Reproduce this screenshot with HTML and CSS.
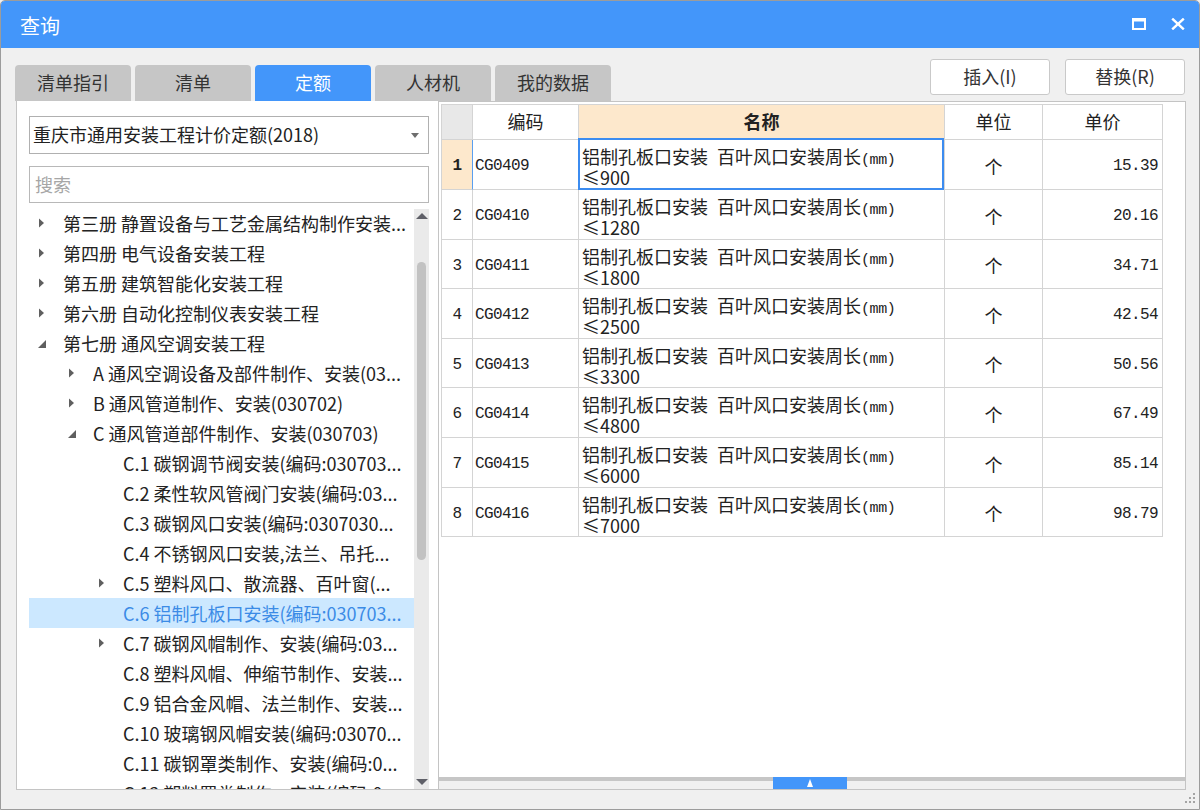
FILE: index.html
```html
<!DOCTYPE html>
<html lang="zh-CN">
<head>
<meta charset="utf-8">
<title>查询</title>
<link rel="stylesheet" href="styles.css">
</head>
<body>
<div class="window">
  <div class="titlebar">
    <span class="title">查询</span>
    <div class="winctl">
      <svg class="ico" width="14" height="12" viewBox="0 0 14 12"><path d="M0 0H14V12H0Z M2 3.5V10H12V3.5Z" fill="#fff" fill-rule="evenodd"/></svg>
      <svg class="ico" width="14" height="12" viewBox="0 0 14 12"><path d="M1.2 0.6L12.8 11.4M12.8 0.6L1.2 11.4" stroke="#fff" stroke-width="2.4" fill="none"/></svg>
    </div>
  </div>
  <div class="main">
    <div class="toprow">
      <div class="tabs">
        <div class="tab">清单指引</div>
        <div class="tab">清单</div>
        <div class="tab active">定额</div>
        <div class="tab">人材机</div>
        <div class="tab">我的数据</div>
      </div>
      <div class="actions">
        <div class="btn">插入(I)</div>
        <div class="btn">替换(R)</div>
      </div>
    </div>
    <div class="panels">
      <div class="left">
        <div class="select">
          <span>重庆市通用安装工程计价定额(2018)</span>
          <svg width="8" height="5" viewBox="0 0 8 5"><path d="M0 0H8L4 5Z" fill="#6e6e6e"/></svg>
        </div>
        <div class="search">搜索</div>
        <div class="treewrap">
          <div class="tree">
            <div class="node"><span class="exp"><svg width="7" height="10" viewBox="0 0 7 10"><path d="M1 0.5L6 5L1 9.5Z" fill="#5f5f5f"/></svg></span><span class="lbl">第三册 静置设备与工艺金属结构制作安装...</span></div>
            <div class="node"><span class="exp"><svg width="7" height="10" viewBox="0 0 7 10"><path d="M1 0.5L6 5L1 9.5Z" fill="#5f5f5f"/></svg></span><span class="lbl">第四册 电气设备安装工程</span></div>
            <div class="node"><span class="exp"><svg width="7" height="10" viewBox="0 0 7 10"><path d="M1 0.5L6 5L1 9.5Z" fill="#5f5f5f"/></svg></span><span class="lbl">第五册 建筑智能化安装工程</span></div>
            <div class="node"><span class="exp"><svg width="7" height="10" viewBox="0 0 7 10"><path d="M1 0.5L6 5L1 9.5Z" fill="#5f5f5f"/></svg></span><span class="lbl">第六册 自动化控制仪表安装工程</span></div>
            <div class="node"><span class="exp"><svg class="down" width="8" height="8" viewBox="0 0 8 8"><path d="M8 0V8H0Z" fill="#5f5f5f"/></svg></span><span class="lbl">第七册 通风空调安装工程</span></div>
            <div class="node l1"><span class="exp"><svg width="7" height="10" viewBox="0 0 7 10"><path d="M1 0.5L6 5L1 9.5Z" fill="#5f5f5f"/></svg></span><span class="lbl">A 通风空调设备及部件制作、安装(03...</span></div>
            <div class="node l1"><span class="exp"><svg width="7" height="10" viewBox="0 0 7 10"><path d="M1 0.5L6 5L1 9.5Z" fill="#5f5f5f"/></svg></span><span class="lbl">B 通风管道制作、安装(030702)</span></div>
            <div class="node l1"><span class="exp"><svg class="down" width="8" height="8" viewBox="0 0 8 8"><path d="M8 0V8H0Z" fill="#5f5f5f"/></svg></span><span class="lbl">C 通风管道部件制作、安装(030703)</span></div>
            <div class="node l2"><span class="exp"></span><span class="lbl">C.1 碳钢调节阀安装(编码:030703...</span></div>
            <div class="node l2"><span class="exp"></span><span class="lbl">C.2 柔性软风管阀门安装(编码:03...</span></div>
            <div class="node l2"><span class="exp"></span><span class="lbl">C.3 碳钢风口安装(编码:0307030...</span></div>
            <div class="node l2"><span class="exp"></span><span class="lbl">C.4 不锈钢风口安装,法兰、吊托...</span></div>
            <div class="node l2"><span class="exp"><svg width="7" height="10" viewBox="0 0 7 10"><path d="M1 0.5L6 5L1 9.5Z" fill="#5f5f5f"/></svg></span><span class="lbl">C.5 塑料风口、散流器、百叶窗(...</span></div>
            <div class="node l2 sel"><span class="exp"></span><span class="lbl">C.6 铝制孔板口安装(编码:030703...</span></div>
            <div class="node l2"><span class="exp"><svg width="7" height="10" viewBox="0 0 7 10"><path d="M1 0.5L6 5L1 9.5Z" fill="#5f5f5f"/></svg></span><span class="lbl">C.7 碳钢风帽制作、安装(编码:03...</span></div>
            <div class="node l2"><span class="exp"></span><span class="lbl">C.8 塑料风帽、伸缩节制作、安装...</span></div>
            <div class="node l2"><span class="exp"></span><span class="lbl">C.9 铝合金风帽、法兰制作、安装...</span></div>
            <div class="node l2"><span class="exp"></span><span class="lbl">C.10 玻璃钢风帽安装(编码:03070...</span></div>
            <div class="node l2"><span class="exp"></span><span class="lbl">C.11 碳钢罩类制作、安装(编码:0...</span></div>
            <div class="node l2"><span class="exp"></span><span class="lbl">C.12 塑料罩类制作、安装(编码:0...</span></div>
          </div>
          <div class="vscroll">
            <svg class="arr-up" width="12" height="6" viewBox="0 0 12 6"><path d="M0 6L6 0L12 6Z" fill="#5f6068"/></svg>
            <div class="vthumb"></div>
            <svg class="arr-down" width="12" height="6" viewBox="0 0 12 6"><path d="M0 0L6 6L12 0Z" fill="#5f6068"/></svg>
          </div>
        </div>
      </div>
      <div class="right">
        <div class="gridarea">
          <div class="grid">
            <div class="c h rn"></div>
            <div class="c h">编码</div>
            <div class="c h hl">名称</div>
            <div class="c h">单位</div>
            <div class="c h">单价</div>

            <div class="c rn cur-row">1</div>
            <div class="c code">CG0409</div>
            <div class="c name cur"><span class="ln">铝制孔板口安装&ensp;百叶风口安装周长<span class="mm">(mm)</span></span><span class="ln">≤900</span></div>
            <div class="c unit">个</div>
            <div class="c price">15.39</div>

            <div class="c rn">2</div>
            <div class="c code">CG0410</div>
            <div class="c name"><span class="ln">铝制孔板口安装&ensp;百叶风口安装周长<span class="mm">(mm)</span></span><span class="ln">≤1280</span></div>
            <div class="c unit">个</div>
            <div class="c price">20.16</div>

            <div class="c rn">3</div>
            <div class="c code">CG0411</div>
            <div class="c name"><span class="ln">铝制孔板口安装&ensp;百叶风口安装周长<span class="mm">(mm)</span></span><span class="ln">≤1800</span></div>
            <div class="c unit">个</div>
            <div class="c price">34.71</div>

            <div class="c rn">4</div>
            <div class="c code">CG0412</div>
            <div class="c name"><span class="ln">铝制孔板口安装&ensp;百叶风口安装周长<span class="mm">(mm)</span></span><span class="ln">≤2500</span></div>
            <div class="c unit">个</div>
            <div class="c price">42.54</div>

            <div class="c rn">5</div>
            <div class="c code">CG0413</div>
            <div class="c name"><span class="ln">铝制孔板口安装&ensp;百叶风口安装周长<span class="mm">(mm)</span></span><span class="ln">≤3300</span></div>
            <div class="c unit">个</div>
            <div class="c price">50.56</div>

            <div class="c rn">6</div>
            <div class="c code">CG0414</div>
            <div class="c name"><span class="ln">铝制孔板口安装&ensp;百叶风口安装周长<span class="mm">(mm)</span></span><span class="ln">≤4800</span></div>
            <div class="c unit">个</div>
            <div class="c price">67.49</div>

            <div class="c rn">7</div>
            <div class="c code">CG0415</div>
            <div class="c name"><span class="ln">铝制孔板口安装&ensp;百叶风口安装周长<span class="mm">(mm)</span></span><span class="ln">≤6000</span></div>
            <div class="c unit">个</div>
            <div class="c price">85.14</div>

            <div class="c rn">8</div>
            <div class="c code">CG0416</div>
            <div class="c name"><span class="ln">铝制孔板口安装&ensp;百叶风口安装周长<span class="mm">(mm)</span></span><span class="ln">≤7000</span></div>
            <div class="c unit">个</div>
            <div class="c price">98.79</div>
          </div>
        </div>
        <div class="hscroll">
          <div class="hthumb"><svg width="6" height="8" viewBox="0 0 6 8"><path d="M0 8L3 0L6 8Z" fill="#fff"/></svg></div>
        </div>
      </div>
    </div>
  </div>
  <div class="status">
    <svg width="12" height="12" viewBox="0 0 12 12"><g fill="#a4a4a4"><rect x="9" y="0" width="2" height="2"/><rect x="5" y="4" width="2" height="2"/><rect x="9" y="4" width="2" height="2"/><rect x="1" y="8" width="2" height="2"/><rect x="5" y="8" width="2" height="2"/><rect x="9" y="8" width="2" height="2"/></g></svg>
  </div>
</div>
</body>
</html>
```

FILE: styles.css
```css
* { box-sizing: border-box; }
html, body { margin: 0; padding: 0; }
body {
  width: 1200px;
  height: 810px;
  overflow: hidden;
  background: #f0f0f0;
  font-family: "Noto Sans CJK SC", "Noto Sans", sans-serif;
  font-size: 18px;
  line-height: 1.2;
  color: #222;
}
.window {
  width: 1200px;
  height: 810px;
  border: 1px solid #9c9c9c;
  border-radius: 5px 5px 0 0;
  overflow: hidden;
  display: flex;
  flex-direction: column;
  background: #f0f0f0;
}
.titlebar {
  height: 47px;
  flex: none;
  background: #4396fa;
  color: #fff;
  display: flex;
  align-items: center;
  padding: 0 14px 0 19px;
}
.title { flex: 1; font-size: 20px; line-height: 24px; margin-top: 3px; }
.winctl { display: flex; align-items: center; gap: 25px; margin-top: -1px; }
.ico { display: block; }

.main {
  flex: 1;
  display: flex;
  flex-direction: column;
  padding: 0 13px 0 14px;
}
.toprow {
  height: 53px;
  flex: none;
  display: flex;
  justify-content: space-between;
}
.tabs { display: flex; gap: 4px; align-self: flex-end; }
.tab {
  width: 116px;
  height: 36px;
  background: #c6c6c6;
  border-radius: 4px 4px 0 0;
  display: flex;
  align-items: center;
  justify-content: center;
  color: #333;
}
.tab.active { background: #4396fa; color: #fff; }
.actions { display: flex; gap: 15px; margin-top: 11px; margin-right: 1px; }
.btn {
  width: 120px;
  height: 36px;
  background: #fff;
  border: 1px solid #c9c9c9;
  border-radius: 3px;
  display: flex;
  align-items: center;
  justify-content: center;
  color: #333;
}

.panels { height: 689px; flex: none; display: flex; }
.left {
  width: 422px;
  margin-left: 1px;
  background: #fff;
  border-left: 1px solid #c4c4c4;
  border-bottom: 1px solid #c4c4c4;
  padding: 15px 9px 0 12px;
  display: flex;
  flex-direction: column;
}
.select {
  height: 38px;
  flex: none;
  border: 1px solid #b0b0b0;
  display: flex;
  align-items: center;
  justify-content: space-between;
  padding: 0 9px 0 3px;
}
.search {
  height: 37px;
  flex: none;
  margin-top: 12px;
  border: 1px solid #b8b8b8;
  padding-left: 5px;
  display: flex;
  align-items: center;
  color: #a6a6a6;
}
.treewrap { flex: 1; min-height: 0; margin-top: 5px; display: flex; }
.tree { flex: 1; min-width: 0; overflow: hidden; }
.node {
  height: 30px;
  display: flex;
  align-items: center;
  white-space: nowrap;
  color: #222;
}
.node.l1 { padding-left: 30px; }
.node.l2 { padding-left: 60px; }
.node.sel { background: #cce8ff; color: #3b8be6; }
.exp { width: 34px; flex: none; display: flex; align-items: center; padding-left: 9px; }
.exp svg { display: block; }
.exp svg.down { margin-top: 2px; }
.lbl { overflow: hidden; line-height: 30px; }
.vscroll {
  width: 15px;
  flex: none;
  margin-top: 1px;
  background: #eaeaea;
  display: flex;
  flex-direction: column;
  align-items: center;
}
.arr-up { display: block; margin-top: 4px; }
.vthumb { width: 9px; height: 298px; margin-top: 43px; border-radius: 5px; background: #c2c2c2; }
.arr-down { display: block; margin-top: auto; margin-bottom: 4px; }

.right {
  width: 748px;
  border: 1px solid #c4c4c4;
  background: #fff;
  display: flex;
  flex-direction: column;
}
.gridarea { flex: 1; padding: 2px 0 0 2px; }
.grid {
  display: grid;
  grid-template-columns: 31px 106px 366px 98px 120px;
  grid-template-rows: 35px 50px 50px 49px 50px 49px 50px 50px 49px;
  width: max-content;
  border-left: 1px solid #d4d4d4;
  border-top: 1px solid #d4d4d4;
}
.c {
  border-right: 1px solid #d4d4d4;
  border-bottom: 1px solid #d4d4d4;
  display: flex;
  align-items: center;
  white-space: nowrap;
}
.c.h { justify-content: center; color: #222; }
.c.h.rn { background: #e8e8e8; }
.c.hl { background: #fde8cc; font-weight: bold; }
.rn {
  justify-content: center;
  font-family: "Liberation Mono", monospace;
  font-size: 16px;
  letter-spacing: -0.6px;
  padding-top: 5px;
}
.rn.cur-row { background: #fde8cc; font-weight: bold; border-right-color: #5a9ff0; }
.code {
  padding: 5px 0 0 2px;
  font-family: "Liberation Mono", monospace;
  font-size: 16px;
  letter-spacing: -0.6px;
}
.name {
  flex-direction: column;
  align-items: flex-start;
  justify-content: flex-start;
  padding: 7px 0 0 3px;
}
.ln { display: block; height: 21px; line-height: 19px; }
.mm {
  font-family: "Liberation Mono", monospace;
  font-size: 15px;
  letter-spacing: -0.4px;
}
.name.cur { position: relative; }
.name.cur::after {
  content: "";
  position: absolute;
  left: -1px;
  top: -2px;
  right: 0;
  bottom: -1px;
  border: 2px solid #3c8cf0;
}
.unit { justify-content: center; padding-top: 4px; }
.price {
  justify-content: flex-end;
  padding: 5px 4px 0 0;
  font-family: "Liberation Mono", monospace;
  font-size: 16px;
  letter-spacing: -0.6px;
}
.hscroll {
  height: 12px;
  flex: none;
  background: linear-gradient(#c6c6c6 0, #c6c6c6 4px, #f0f0f0 4px);
  display: flex;
}
.hthumb {
  width: 74px;
  height: 12px;
  margin-left: 334px;
  background: #4396fa;
  display: flex;
  align-items: center;
  justify-content: center;
}
.hthumb svg { display: block; }

.status {
  height: 19px;
  flex: none;
  display: flex;
  justify-content: flex-end;
  align-items: flex-end;
  padding: 0 3px 4px 0;
}
.status svg { display: block; }
```
